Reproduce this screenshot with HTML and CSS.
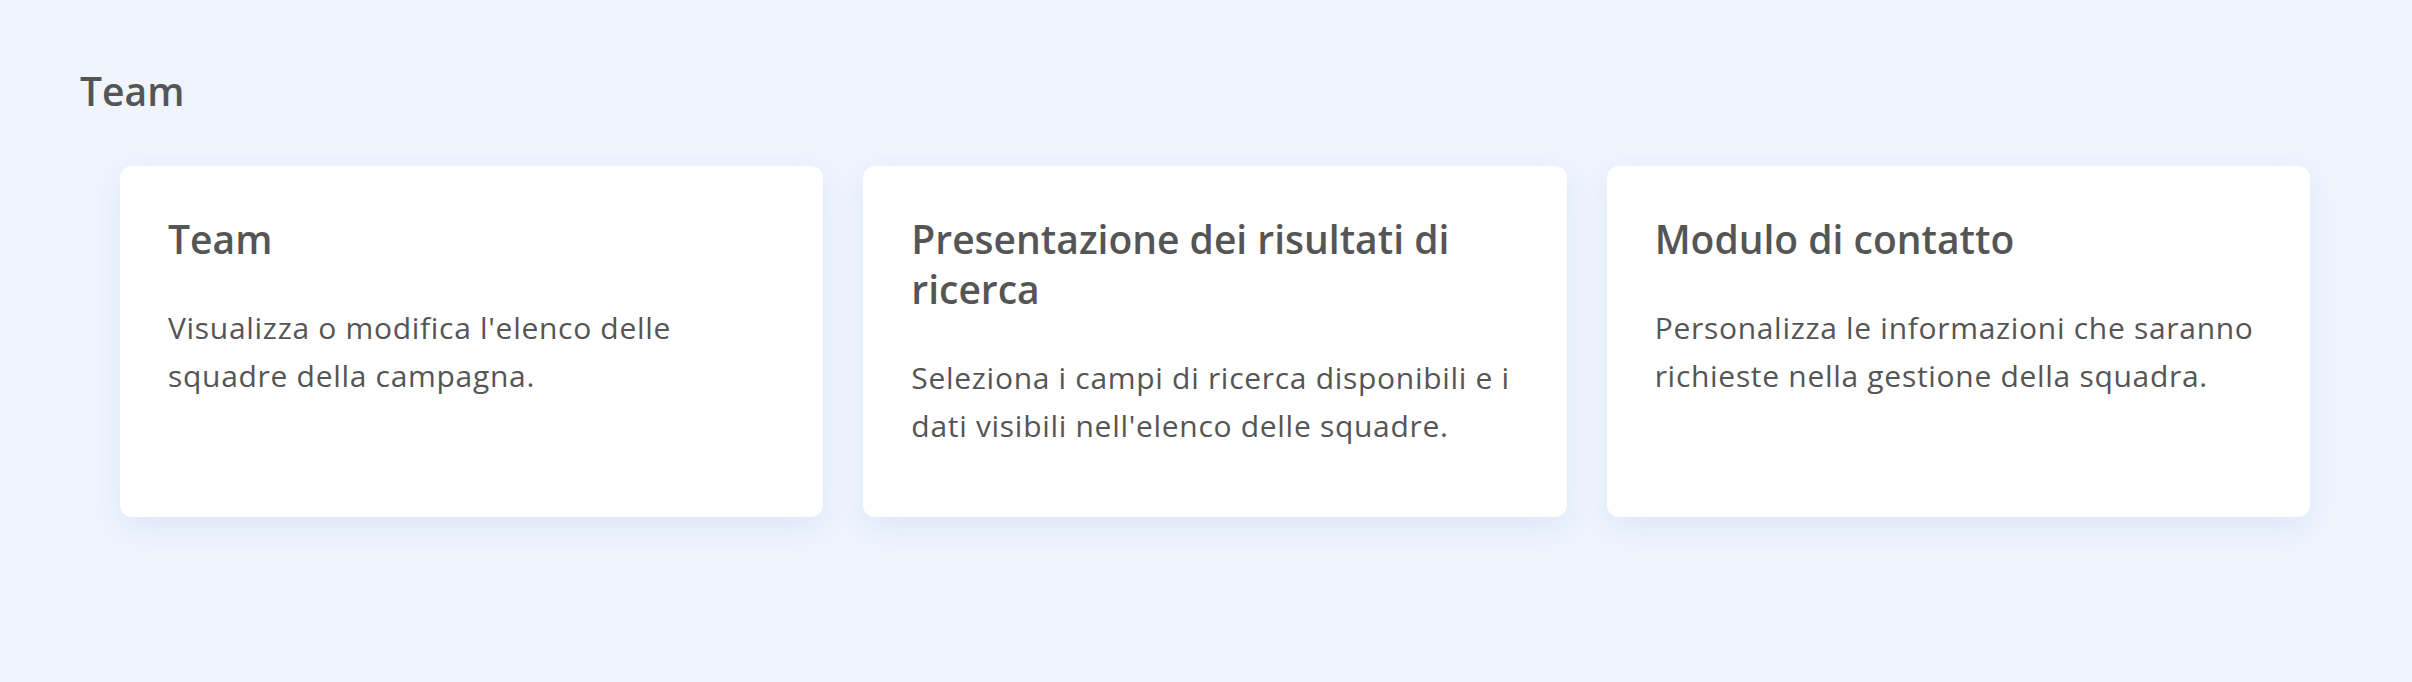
FILE: index.html
```html
<!DOCTYPE html>
<html lang="it">
<head>
<meta charset="utf-8">
<title>Team</title>
<link rel="stylesheet" href="styles.css">
</head>
<body>
<main class="page">
  <h1 class="page-title">Team</h1>
  <section class="cards">
    <article class="card">
      <h2 class="card-title">Team</h2>
      <p class="card-text">Visualizza o modifica l'elenco delle squadre della campagna.</p>
    </article>
    <article class="card">
      <h2 class="card-title">Presentazione dei risultati di ricerca</h2>
      <p class="card-text">Seleziona i campi di ricerca disponibili e i dati visibili nell'elenco delle squadre.</p>
    </article>
    <article class="card">
      <h2 class="card-title">Modulo di contatto</h2>
      <p class="card-text">Personalizza le informazioni che saranno richieste nella gestione della squadra.</p>
    </article>
  </section>
</main>
</body>
</html>
```
FILE: styles.css
```css
html, body {
  margin: 0;
  padding: 0;
  background: #eff4fd;
}

body {
  font-family: "Open Sans", "Noto Sans", sans-serif;
  color: #555555;
  min-height: 682px;
}

.page {
  padding: 66px 102px 0 80px;
}

.page-title {
  margin: 0;
  font-size: 39px;
  line-height: 50px;
  font-weight: 600;
  color: #555555;
}

.cards {
  margin: 50px 0 0 40px;
  display: grid;
  grid-template-columns: repeat(3, 1fr);
  gap: 40px;
}

.card {
  background: #ffffff;
  border-radius: 12px;
  padding: 48px 48px 67px;
  box-shadow: 0 10px 30px rgba(70, 120, 230, 0.10);
}

.card-title {
  margin: 0;
  font-size: 39px;
  line-height: 50px;
  font-weight: 600;
  color: #555555;
}

.card-text {
  margin: 40px 0 0;
  font-size: 30px;
  line-height: 48px;
  letter-spacing: 0.7px;
  font-weight: 400;
  color: #555555;
}
```
